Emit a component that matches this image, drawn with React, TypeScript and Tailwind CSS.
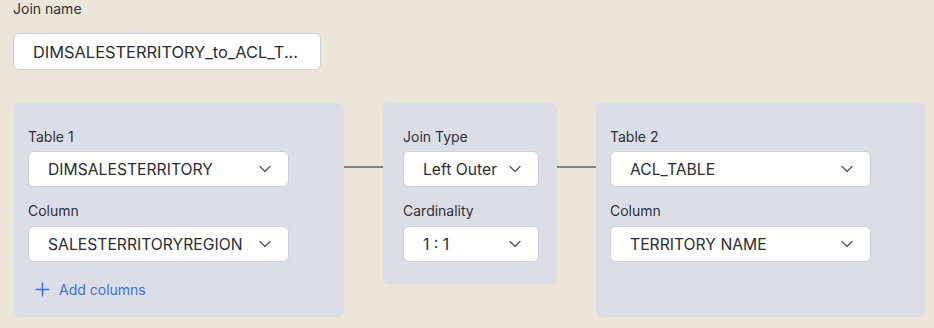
import React from 'react';
import { ChevronDown, Plus } from 'lucide-react';

const font = { fontFamily: 'Inter, "Noto Sans", sans-serif' };

type SelectProps = { value: string; width: string };

const Select: React.FC<SelectProps> = ({ value, width }) => (
  <div
    className={`${width} h-[36px] flex items-center justify-between bg-white border border-[#cdd0d9] rounded-[6px] pl-[19px] pr-[13px]`}
  >
    <span className="text-[15.7px] leading-[20px] pt-[2px] text-[#2b2d33] whitespace-nowrap">{value}</span>
    <ChevronDown className="h-[20px] w-[20px] text-[#5a5f6b]" strokeWidth={1.7} />
  </div>
);

const Label: React.FC<{ children: React.ReactNode }> = ({ children }) => (
  <div className="text-[14px] leading-[17px] text-[#2f3138]">{children}</div>
);

const Connector = () => <div className="w-[39px] h-[2px] bg-[#85847f] mt-[63px]" />;

export default function App() {
  return (
    <div style={font} className="w-[934px] h-[328px] bg-[#ece6da] pl-[13px] overflow-hidden">
      <div className="text-[14px] leading-[17px] text-[#2f3138]">Join name</div>
      <div className="mt-[16px] w-[308px] h-[37px] bg-white border border-[#cdd0d9] rounded-[6px] flex items-center pl-[19px]">
        <span className="text-[16.4px] leading-[20px] text-[#2b2d33] whitespace-nowrap">DIMSALESTERRITORY_to_ACL_T...</span>
      </div>

      <div className="mt-[33px] ml-[1px] flex items-start">
        {/* Table 1 */}
        <div className="w-[330px] h-[214px] bg-[#dcdee7] rounded-[6px] pl-[14px] pt-[25px]">
          <Label>Table 1</Label>
          <div className="mt-[6px]">
            <Select value="DIMSALESTERRITORY" width="w-[261px]" />
          </div>
          <div className="mt-[15px]">
            <Label>Column</Label>
          </div>
          <div className="mt-[7px]">
            <Select value="SALESTERRITORYREGION" width="w-[261px]" />
          </div>
          <div className="mt-[17px] flex items-center pl-[4px] text-[#3f6fe6]">
            <Plus className="h-[21px] w-[21px]" strokeWidth={1.8} />
            <span className="ml-[6px] text-[14px] leading-[20px]">Add columns</span>
          </div>
        </div>

        <Connector />

        {/* Join */}
        <div className="w-[174px] h-[181px] bg-[#dcdee7] rounded-[6px] pl-[20px] pt-[25px]">
          <Label>Join Type</Label>
          <div className="mt-[6px]">
            <Select value="Left Outer" width="w-[136px]" />
          </div>
          <div className="mt-[15px]">
            <Label>Cardinality</Label>
          </div>
          <div className="mt-[7px]">
            <Select value="1 : 1" width="w-[136px]" />
          </div>
        </div>

        <Connector />

        {/* Table 2 */}
        <div className="w-[330px] h-[214px] bg-[#dcdee7] rounded-[6px] pl-[14px] pt-[25px]">
          <Label>Table 2</Label>
          <div className="mt-[6px]">
            <Select value="ACL_TABLE" width="w-[261px]" />
          </div>
          <div className="mt-[15px]">
            <Label>Column</Label>
          </div>
          <div className="mt-[7px]">
            <Select value="TERRITORY NAME" width="w-[261px]" />
          </div>
        </div>
      </div>
    </div>
  );
}
